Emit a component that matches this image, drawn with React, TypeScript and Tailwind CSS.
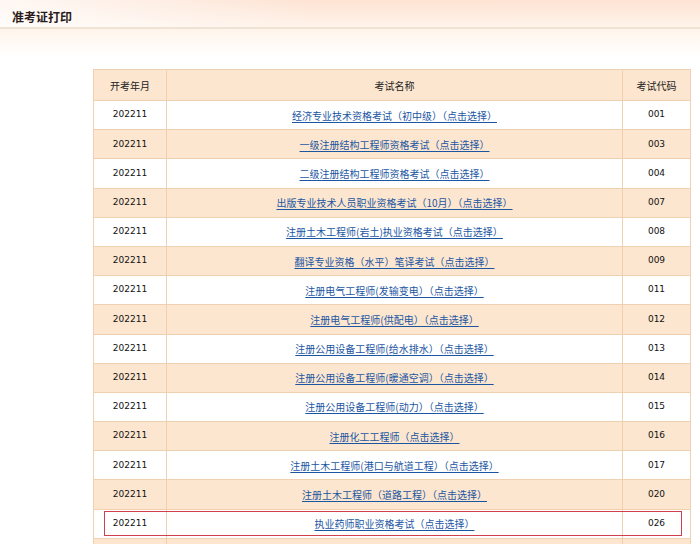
import React from 'react'

type Row = { month: string; name: string; code: string }

const rows: Row[] = [
  { month: '202211', name: '经济专业技术资格考试（初中级）（点击选择）', code: '001' },
  { month: '202211', name: '一级注册结构工程师资格考试（点击选择）', code: '003' },
  { month: '202211', name: '二级注册结构工程师资格考试（点击选择）', code: '004' },
  { month: '202211', name: '出版专业技术人员职业资格考试（10月）（点击选择）', code: '007' },
  { month: '202211', name: '注册土木工程师(岩土)执业资格考试（点击选择）', code: '008' },
  { month: '202211', name: '翻译专业资格（水平）笔译考试（点击选择）', code: '009' },
  { month: '202211', name: '注册电气工程师(发输变电）（点击选择）', code: '011' },
  { month: '202211', name: '注册电气工程师(供配电）（点击选择）', code: '012' },
  { month: '202211', name: '注册公用设备工程师(给水排水）（点击选择）', code: '013' },
  { month: '202211', name: '注册公用设备工程师(暖通空调）（点击选择）', code: '014' },
  { month: '202211', name: '注册公用设备工程师(动力）（点击选择）', code: '015' },
  { month: '202211', name: '注册化工工程师（点击选择）', code: '016' },
  { month: '202211', name: '注册土木工程师(港口与航道工程）（点击选择）', code: '017' },
  { month: '202211', name: '注册土木工程师（道路工程）（点击选择）', code: '020' },
  { month: '202211', name: '执业药师职业资格考试（点击选择）', code: '026' },
  // next row is only partly in view
  { month: '', name: '', code: '' },
]

const cjk = "font-['SimSun','Noto_Sans_CJK_SC',sans-serif]"

export default function App() {
  return (
    <div className="relative w-[700px] h-[544px] overflow-hidden bg-white">
      {/* page title band */}
      <div className="h-[29px] border-b-2 border-[#efe3d4] bg-[linear-gradient(to_bottom,#fde3d3,#fff3ea)]">
        <div className="h-full bg-[linear-gradient(to_right,rgba(255,255,255,0.75),rgba(255,255,255,0)_45%)] pl-[12px] pt-[4px]">
          <span className={`${cjk} text-[12px] font-bold text-[#2a1a1a]`}>准考证打印</span>
        </div>
      </div>
      <div className="h-[40px] bg-[linear-gradient(to_bottom,#fff4ea,#ffffff_70%)]" />

      <div className="pl-[93px]">
        <table className={`${cjk} w-[598px] border-collapse text-[10px] text-[#222]`}>
          <thead>
            <tr className="h-[31px] bg-[#fce6cf]">
              <th className="w-[73px] border border-[#efd0b0] font-normal">开考年月</th>
              <th className="border border-[#efd0b0] font-normal">考试名称</th>
              <th className="w-[68px] border border-[#efd0b0] font-normal">考试代码</th>
            </tr>
          </thead>
          <tbody>
            {rows.map((r, i) => (
              <tr key={i} className={`h-[29.2px] ${i % 2 === 0 ? 'bg-white' : 'bg-[#fce6cf]'}`}>
                <td className="border border-[#efd0b0] text-center font-['DejaVu_Sans',sans-serif] text-[9px] text-[#111]">{r.month}</td>
                <td className="border border-[#efd0b0] text-center">
                  {r.name && (
                    <a href="#" className="text-[#1b56a3] underline underline-offset-2">{r.name}</a>
                  )}
                </td>
                <td className="border border-[#efd0b0] text-center font-['DejaVu_Sans',sans-serif] text-[9px] text-[#111]">{r.code}</td>
              </tr>
            ))}
          </tbody>
        </table>
      </div>

      {/* highlight box around the selected exam */}
      <div className="absolute left-[104px] top-[511px] h-[25px] w-[578px] border border-[#d0404c]" />
    </div>
  )
}
